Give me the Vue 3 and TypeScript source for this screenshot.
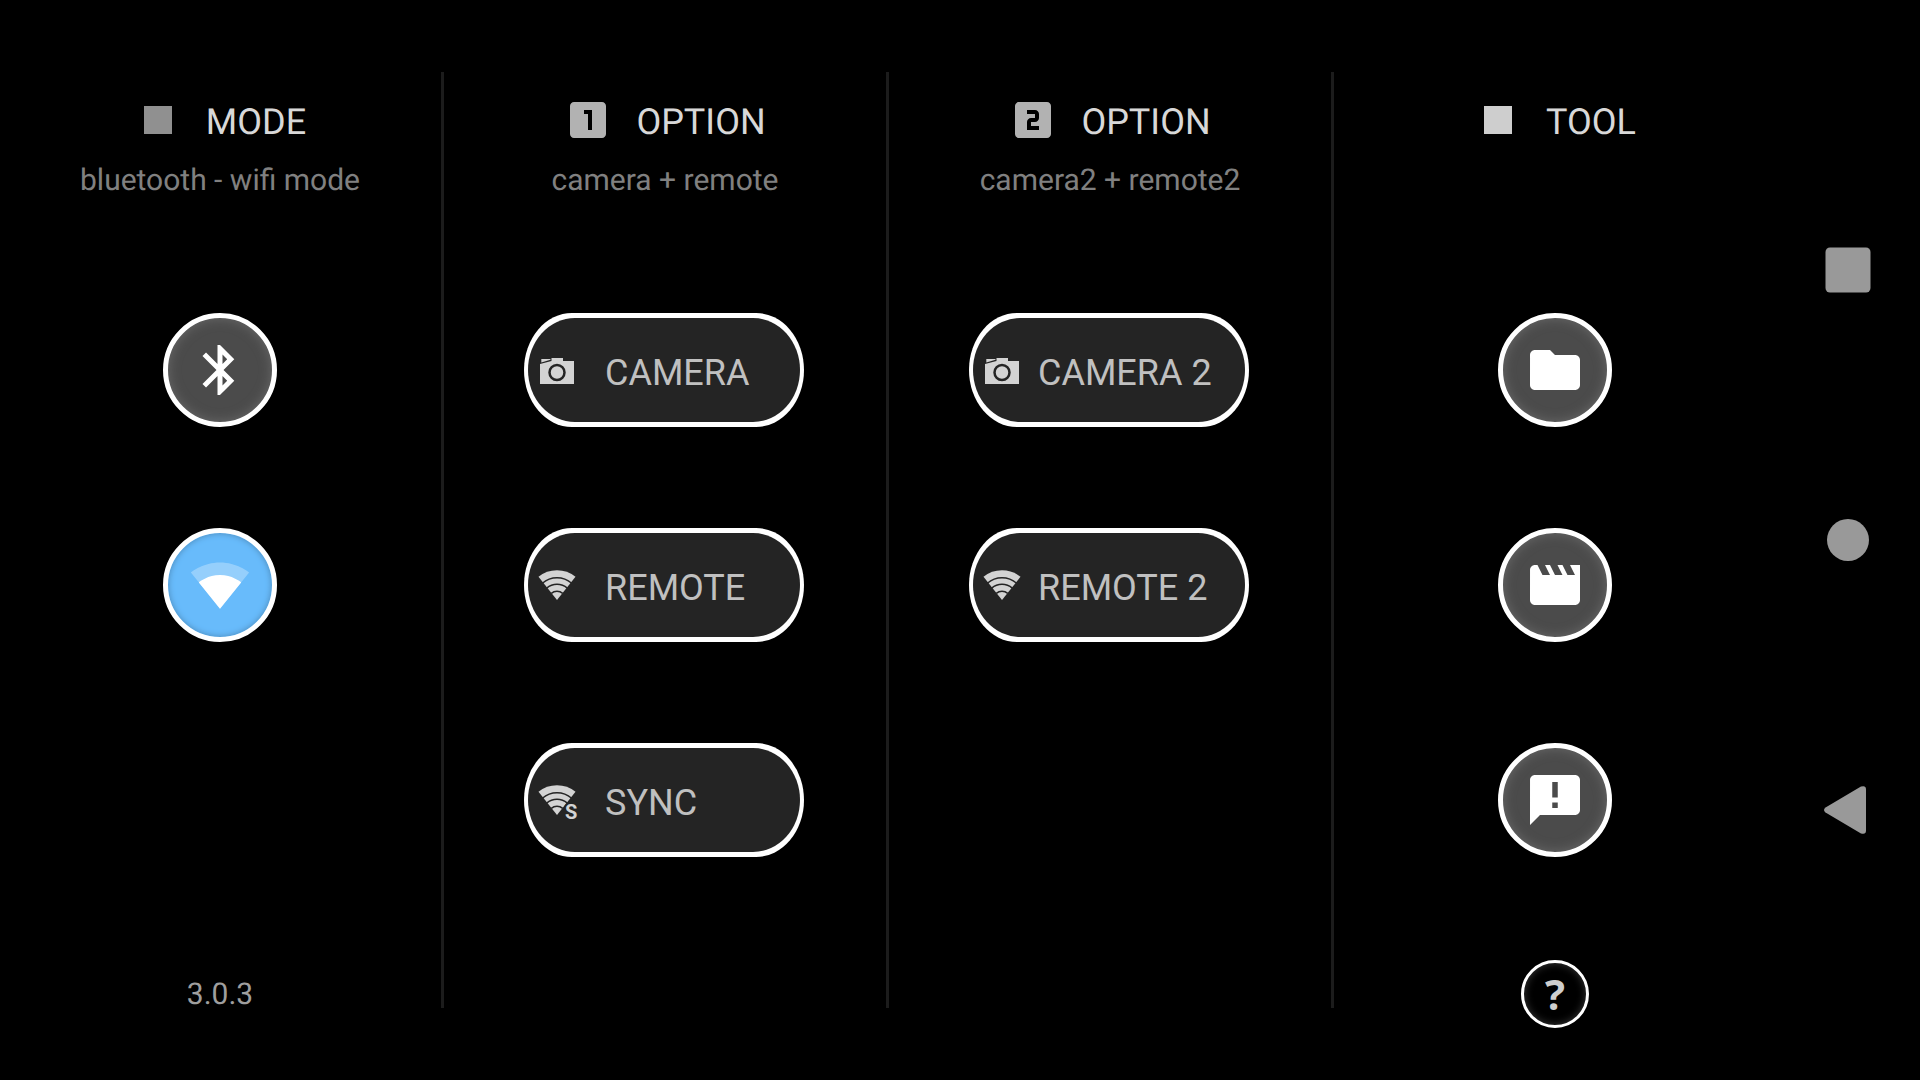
<script setup lang="ts">
type PillIcon = 'camera' | 'wifi' | 'sync'

interface RoundAction {
  label: string
  path: string
  active?: boolean
}

interface PillAction {
  label: string
  icon: PillIcon
}

interface Column {
  id: string
  title: string
  subtitle: string
  mark: string
  markTone: string
  rounds: RoundAction[]
  pills: PillAction[]
  compact?: boolean
}

const SQUARE = 'M5 5h14v14H5z'
const BOX = 'M19 3H5c-1.1 0-2 .9-2 2v14c0 1.1.9 2 2 2h14c1.1 0 2-.9 2-2V5c0-1.1-.9-2-2-2z'

const columns: Column[] = [
  {
    id: 'mode',
    title: 'MODE',
    subtitle: 'bluetooth - wifi mode',
    mark: SQUARE,
    markTone: 'dim',
    rounds: [
      {
        label: 'Bluetooth mode',
        path: 'M17.71 7.71L12 2h-1v7.59L6.41 5 5 6.41 10.59 12 5 17.59 6.41 19 11 14.41V22h1l5.71-5.71-4.3-4.29 4.3-4.29zM13 5.83l1.88 1.88L13 9.59V5.83zm1.88 10.46L13 18.17v-3.76l1.88 1.88z',
      },
      {
        label: 'Wifi mode',
        path: 'M3.53 10.95l8.46 10.54.01.01.01-.01 8.46-10.54C20.04 10.62 16.81 8 12 8c-4.81 0-8.04 2.62-8.47 2.95z',
        active: true,
      },
    ],
    pills: [],
  },
  {
    id: 'option-1',
    title: 'OPTION',
    subtitle: 'camera + remote',
    mark: BOX + 'M14 17h-2V9h-2V7h4v10z',
    markTone: 'mid',
    rounds: [],
    pills: [
      { label: 'CAMERA', icon: 'camera' },
      { label: 'REMOTE', icon: 'wifi' },
      { label: 'SYNC', icon: 'sync' },
    ],
  },
  {
    id: 'option-2',
    title: 'OPTION',
    subtitle: 'camera2 + remote2',
    mark: BOX + 'M15 11c0 1.11-.9 2-2 2h-2v2h4v2H9v-4c0-1.11.9-2 2-2h2V9H9V7h4c1.1 0 2 .89 2 2v2z',
    markTone: 'mid',
    rounds: [],
    pills: [
      { label: 'CAMERA 2', icon: 'camera' },
      { label: 'REMOTE 2', icon: 'wifi' },
    ],
    compact: true,
  },
  {
    id: 'tool',
    title: 'TOOL',
    subtitle: '',
    mark: SQUARE,
    markTone: 'bright',
    rounds: [
      {
        label: 'Files',
        path: 'M10 4H4c-1.1 0-1.99.9-1.99 2L2 18c0 1.1.9 2 2 2h16c1.1 0 2-.9 2-2V8c0-1.1-.9-2-2-2h-8l-2-2z',
      },
      {
        label: 'Movies',
        path: 'M18 4l2 4h-3l-2-4h-2l2 4h-3l-2-4H8l2 4H7L5 4H4c-1.1 0-1.99.9-1.99 2L2 18c0 1.1.9 2 2 2h16c1.1 0 2-.9 2-2V4h-4z',
      },
      {
        label: 'Feedback',
        path: 'M20 2H4c-1.1 0-1.99.9-1.99 2L2 22l4-4h14c1.1 0 2-.9 2-2V4c0-1.1-.9-2-2-2zM10.9 4.8h2.2V11h-2.2zM10.9 13h2.2v2.2h-2.2z',
      },
    ],
    pills: [],
  },
]
</script>

<template>
  <div class="screen">
    <main class="columns">
      <section v-for="col in columns" :key="col.id" class="column">
        <header class="head">
          <svg class="mark" :class="col.markTone" viewBox="0 0 24 24" aria-hidden="true">
            <path :d="col.mark" fill-rule="evenodd" />
          </svg>
          <h2 class="title">{{ col.title }}</h2>
        </header>
        <p class="subtitle">{{ col.subtitle }}</p>

        <div class="actions">
          <button
            v-for="r in col.rounds"
            :key="r.label"
            type="button"
            class="round"
            :class="{ active: r.active }"
            :aria-label="r.label"
          >
            <svg class="glyph" viewBox="0 0 24 24" aria-hidden="true">
              <path
                v-if="r.active"
                fill-opacity=".3"
                d="M23.64 7c-.45-.34-4.93-4-11.64-4C5.28 3 .81 6.66.36 7L12 21.5 23.64 7z"
              />
              <path :d="r.path" fill-rule="evenodd" />
            </svg>
          </button>

          <button
            v-for="p in col.pills"
            :key="p.label"
            type="button"
            class="pill"
            :class="{ compact: col.compact }"
          >
            <svg class="pill-icon" viewBox="0 0 48 48" aria-hidden="true">
              <template v-if="p.icon === 'camera'">
                <path d="M7 18l11.500-3v-3h11.500v3h11v23H7z" />
                <path d="M8.300 13h9.200v.8l-9.200 2.600z" />
                <circle class="cut" cx="24" cy="26.500" r="7.500" stroke-width="2.500" />
              </template>
              <template v-else>
                <path d="M24 39L5.500 15.800a29.700 29.700 0 0 1 37 0z" />
                <path
                  class="cut"
                  stroke-width="1.500"
                  d="M9.400 22.200a22.300 22.300 0 0 1 29.200 0M13.700 27.100a15.700 15.700 0 0 1 20.600 0M18.300 32.400a8.700 8.700 0 0 1 11.400 0"
                />
                <text v-if="p.icon === 'sync'" class="badge" x="32" y="43">S</text>
              </template>
            </svg>
            <span class="pill-label">{{ p.label }}</span>
          </button>
        </div>

        <footer class="foot">
          <span v-if="col.id === 'mode'" class="version">3.0.3</span>
          <button v-if="col.id === 'tool'" type="button" class="help" aria-label="Help">?</button>
        </footer>
      </section>
    </main>

    <nav class="system" aria-label="System navigation">
      <button type="button" aria-label="Recent apps">
        <svg viewBox="0 0 48 48"><rect x="1.500" y="1.500" width="45" height="45" rx="4.500" /></svg>
      </button>
      <button type="button" aria-label="Home">
        <svg viewBox="0 0 48 48"><circle cx="24" cy="24" r="21" /></svg>
      </button>
      <button type="button" aria-label="Back">
        <svg viewBox="0 0 48 48">
          <path d="M1.500 21.500L37 .600Q42 -1 42 3.500V44.500Q42 49 37 47.400L1.500 26.500Q-1.500 24 1.500 21.500z" />
        </svg>
      </button>
    </nav>
  </div>
</template>

<style>
body {
  margin: 0;
  background: #000;
}
</style>

<style scoped>
.screen {
  display: flex;
  min-height: 100vh;
  background: #000;
  font-family: Roboto, 'Liberation Sans', sans-serif;
  text-rendering: geometricPrecision;
}

button {
  margin: 0;
  padding: 0;
  border: 0;
  background: none;
  font: inherit;
  cursor: pointer;
}

svg {
  display: block;
  flex: none;
}

.columns {
  flex: 1;
  display: flex;
  margin-left: -1px;
}

.column {
  flex: 1 1 0;
  min-width: 0;
  display: flex;
  flex-direction: column;
  align-items: center;
  padding: 96px 0 51px;
  box-sizing: border-box;
}

.column + .column {
  padding-left: 3px;
  background: linear-gradient(#1c1c1c, #1c1c1c) 0 72px / 3px calc(100% - 144px) no-repeat;
}

.head {
  display: flex;
  align-items: center;
  gap: 24px;
  height: 48px;
}

.mark {
  width: 48px;
  height: 48px;
}

.dim {
  fill: #909090;
}

.mid {
  fill: #b2b2b2;
}

.bright {
  fill: #cecece;
}

.title {
  margin: 0;
  padding-top: 4px;
  font-size: 36px;
  font-weight: 400;
  line-height: 42px;
  color: #d8d8d8;
}

.subtitle {
  margin: 19px 0 0;
  height: 36px;
  font-size: 30px;
  line-height: 36px;
  color: #808080;
  white-space: nowrap;
}

.actions {
  display: flex;
  flex-direction: column;
  align-items: center;
  gap: 101px;
  margin: 114px 0 48px;
}

.round {
  display: flex;
  align-items: center;
  justify-content: center;
  width: 114px;
  height: 114px;
  box-sizing: border-box;
  border: 5px solid #fff;
  border-radius: 50%;
  background: #4b4b4b;
  box-shadow: inset 0 0 12px #6a6a6a;
}

.round.active {
  background: #68bbfb;
  box-shadow: inset 0 0 6px #4a86b4;
}

.glyph {
  width: 60px;
  height: 60px;
  fill: #fff;
}

.pill {
  position: relative;
  display: flex;
  align-items: center;
  gap: 24px;
  width: 280px;
  height: 114px;
  margin-right: 2px;
  padding-left: 9px;
  box-sizing: border-box;
  border-radius: 48px / 57px;
  background: #fff;
}

.pill::before {
  content: '';
  position: absolute;
  inset: 5px 4px;
  border-radius: 47px / 52px;
  background: #242424;
}

.pill.compact {
  gap: 12px;
}

.pill-icon {
  position: relative;
  width: 48px;
  height: 48px;
  fill: #d3d3d3;
}

.cut {
  fill: none;
  stroke: #242424;
}

.badge {
  font-size: 20px;
  font-weight: 700;
  stroke: #242424;
  stroke-width: 4px;
  paint-order: stroke;
}

.pill-label {
  position: relative;
  padding-top: 6px;
  font-size: 36px;
  line-height: 42px;
  color: #c0c0c0;
  white-space: nowrap;
}

.foot {
  display: flex;
  align-items: center;
  justify-content: center;
  height: 70px;
  margin-top: auto;
}

.version {
  padding-top: 2px;
  font-size: 30px;
  line-height: 36px;
  color: #9e9e9e;
}

.help {
  width: 68px;
  height: 68px;
  box-sizing: border-box;
  border: 3px solid #fff;
  border-radius: 50%;
  box-shadow: inset 0 0 8px #3a3a3a;
  font-family: 'Open Sans', 'Noto Sans', sans-serif;
  font-size: 42px;
  font-weight: 700;
  line-height: 60px;
  color: #cecece;
}

.system {
  flex: none;
  display: flex;
  flex-direction: column;
  align-items: center;
  width: 144px;
  padding: 135px 0;
  box-sizing: border-box;
}

.system button {
  flex: 1;
  display: flex;
  align-items: center;
}

.system svg {
  width: 48px;
  height: 48px;
  overflow: visible;
  fill: #999;
}
</style>
